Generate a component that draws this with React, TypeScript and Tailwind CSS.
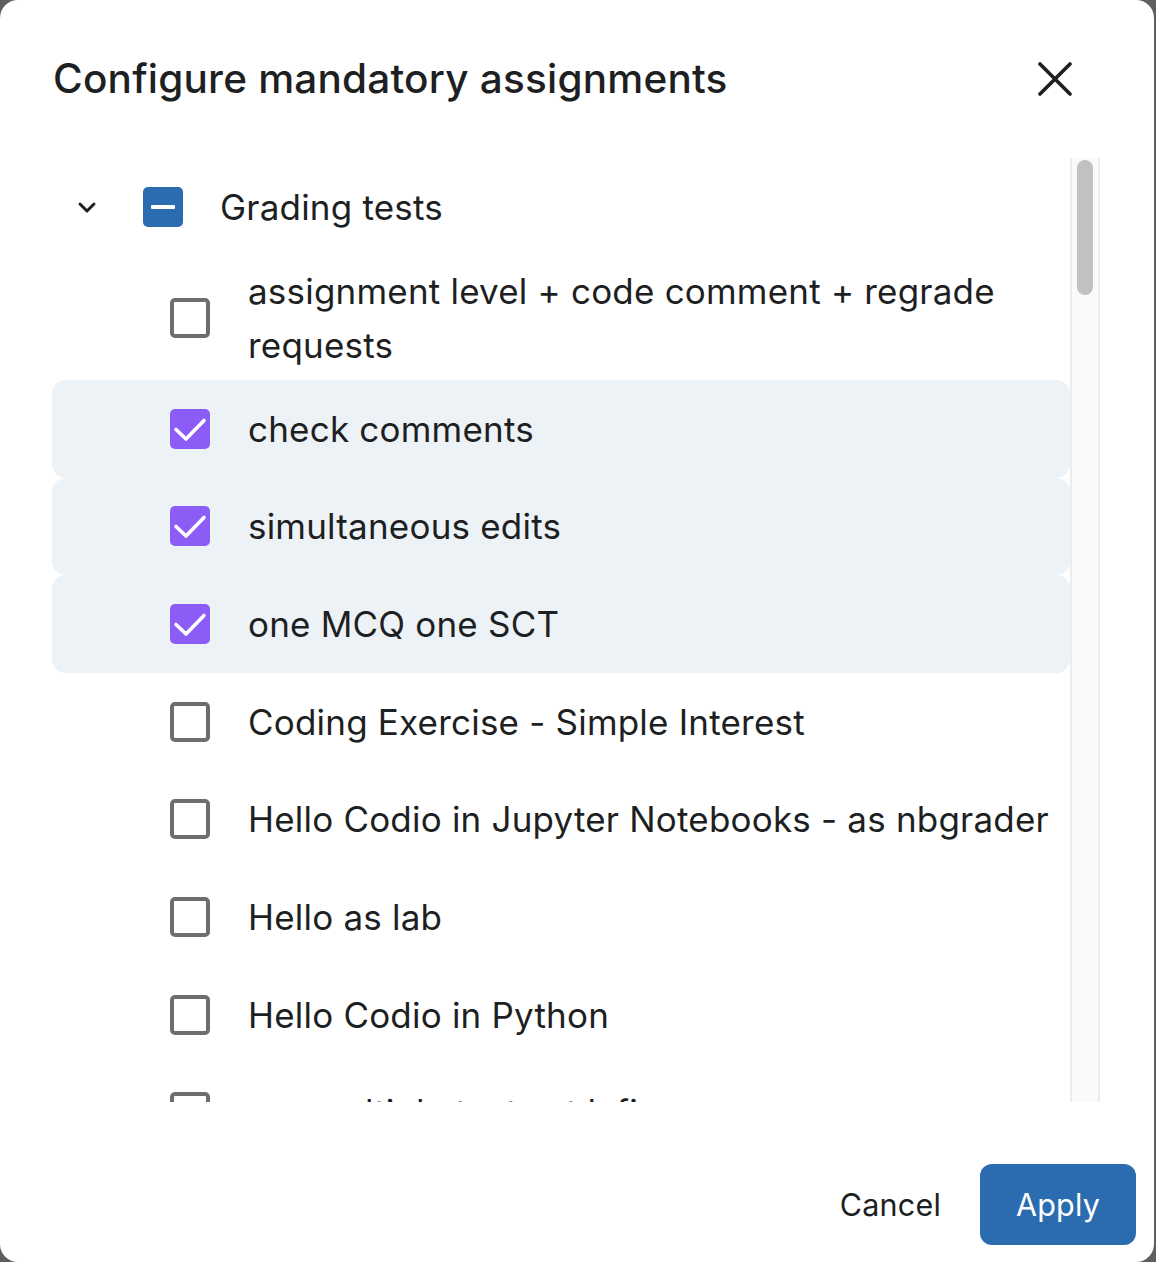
import React from 'react';

const ITEMS = [
    { label: 'assignment level + code comment + regrade requests', checked: false },
    { label: 'check comments', checked: true },
    { label: 'simultaneous edits', checked: true },
    { label: 'one MCQ one SCT', checked: true },
    { label: 'Coding Exercise - Simple Interest', checked: false },
    { label: 'Hello Codio in Jupyter Notebooks - as nbgrader', checked: false },
    { label: 'Hello as lab', checked: false },
    { label: 'Hello Codio in Python', checked: false },
    { label: 'run multiple tests at lafi', checked: false },
];

const Box = ({ checked }: { checked: boolean }) =>
    checked ? (
        <span className="flex h-[40px] w-[40px] shrink-0 items-center justify-center rounded-[5px] bg-[#8b5cf6]">
            <svg width="40" height="40" viewBox="0 0 40 40" fill="none">
                <path d="M6 20.5 L16 30 L34 11.5" stroke="white" strokeWidth="3.6" strokeLinecap="round" strokeLinejoin="round" />
            </svg>
        </span>
    ) : (
        <span className="block h-[40px] w-[40px] shrink-0 rounded-[5px] border-[4px] border-[#6e6e6e] bg-white" />
    );

const App = () => {
    return (
        <div className="h-[1262px] w-[1156px] bg-[#5f5f5f] font-['Inter',sans-serif] text-[#1e1f22]">
            <div className="flex h-[1262px] w-[1154px] flex-col rounded-[18px] bg-white">
                {/* header */}
                <div className="flex h-[158px] shrink-0 items-center justify-between pl-[53px] pr-[82px]">
                    <h2 className="text-[40.5px] font-medium tracking-[0.2px]">Configure mandatory assignments</h2>
                    <svg width="34" height="34" viewBox="0 0 34 34" fill="none">
                        <path d="M2 2 L32 32 M32 2 L2 32" stroke="#1e1f22" strokeWidth="3.6" strokeLinecap="round" />
                    </svg>
                </div>

                {/* list + scrollbar */}
                <div className="flex h-[944px] shrink-0 overflow-hidden pl-[52px]">
                    <div className="w-[1018px] overflow-hidden">
                        <div className="flex h-[98px] items-center">
                            <svg className="ml-[25px] mr-[46px]" width="20" height="14" viewBox="0 0 20 14" fill="none">
                                <path d="M3 4 L10 11 L17 4" stroke="#1e1f22" strokeWidth="3" strokeLinecap="round" strokeLinejoin="round" />
                            </svg>
                            <span className="flex h-[40px] w-[40px] items-center justify-center rounded-[5px] bg-[#2b6cb0]">
                                <span className="block h-[4px] w-[24px] rounded-[1px] bg-white" />
                            </span>
                            <span className="ml-[37px] text-[35px] tracking-[0.2px]">Grading tests</span>
                        </div>
                        {ITEMS.map((item, i) => (
                            <div
                                key={i}
                                className={`flex min-h-[97.67px] items-center rounded-[14px] py-[8px] pl-[118px] pr-[8px] ${item.checked ? 'bg-[#edf2f7]' : ''}`}
                            >
                                <Box checked={item.checked} />
                                <span className="ml-[38px] text-[35px] leading-[54px] tracking-[0.2px]">{item.label}</span>
                            </div>
                        ))}
                    </div>
                    <div className="flex w-[30px] shrink-0 justify-center border-x-[2px] border-[#ececec] bg-[#fafafa] pt-[2px]">
                        <div className="h-[135px] w-[16px] rounded-full bg-[#c1c1c1]" />
                    </div>
                </div>

                {/* footer */}
                <div className="flex flex-1 items-start justify-end gap-[8px] pr-[18px] pt-[62px]">
                    <button className="h-[81px] px-[31px] text-[30.5px] tracking-[0.2px] text-[#1e1f22]">Cancel</button>
                    <button className="h-[81px] w-[156px] rounded-[12px] bg-[#2b6cb0] text-[30.5px] tracking-[0.2px] text-white">Apply</button>
                </div>
            </div>
        </div>
    );
};

export default App;
